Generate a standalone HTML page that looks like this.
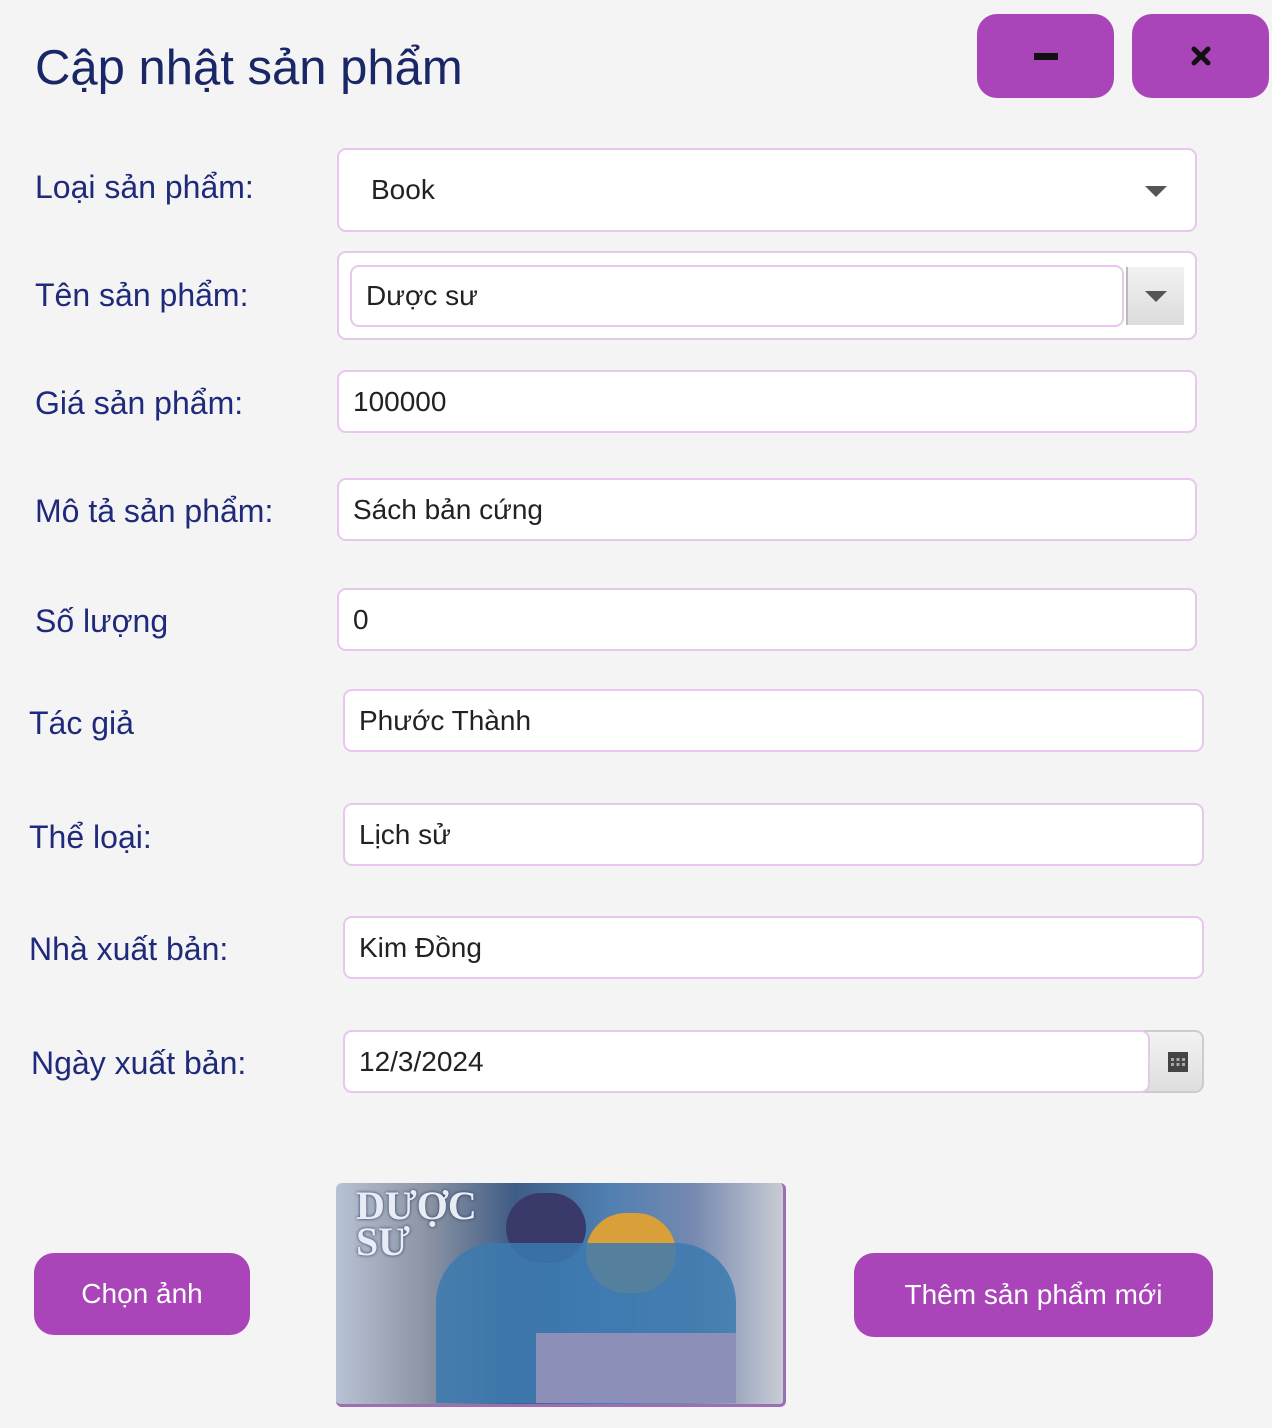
<!DOCTYPE html>
<html><head><meta charset="utf-8"><style>
body{margin:0;width:1272px;height:1428px;background:#f4f4f4;position:relative;overflow:hidden;font-family:"Liberation Sans","DejaVu Sans",sans-serif}
.a{position:absolute}
.lbl{position:absolute;color:#1f2a7a;font-size:32px;line-height:40px}
.f{position:absolute;background:#fff;border:2px solid #e8c6ee;border-radius:9px;box-sizing:border-box;font-size:28px;color:#222;padding-left:14px;display:flex;align-items:center}
.btn{position:absolute;background:#a945b8;border-radius:20px;color:#fff;font-size:28px;display:flex;align-items:center;justify-content:center}
</style></head><body>
<div class="a" style="left:35px;top:38px;font-size:49px;color:#1a2766;line-height:60px">Cập nhật sản phẩm</div>
<div class="btn" style="left:977px;top:14px;width:137px;height:84px"><div style="width:24px;height:7px;background:#111"></div></div>
<div class="btn" style="left:1132px;top:14px;width:137px;height:84px"><svg width="20" height="20" viewBox="0 0 20 20"><path d="M3 3L17 17M17 3L3 17" stroke="#111" stroke-width="5" stroke-linecap="round"/></svg></div>

<div class="lbl" style="left:35px;top:167px">Loại sản phẩm:</div>
<div class="f" style="left:337px;top:148px;width:860px;height:84px;padding-left:32px">Book
<svg class="a" style="left:806px;top:36px" width="22" height="12"><path d="M0 0H22L11 11Z" fill="#555"/></svg></div>

<div class="lbl" style="left:35px;top:275px">Tên sản phẩm:</div>
<div class="f" style="left:337px;top:251px;width:860px;height:89px"></div>
<div class="f" style="left:350px;top:265px;width:774px;height:62px">Dược sư</div>
<div class="a" style="left:1126px;top:267px;width:56px;height:58px;background:linear-gradient(#f2f2f2,#dcdcdc);border-left:2px solid #bbb"><svg class="a" style="left:17px;top:24px" width="22" height="12"><path d="M0 0H22L11 11Z" fill="#555"/></svg></div>

<div class="lbl" style="left:35px;top:383px">Giá sản phẩm:</div>
<div class="f" style="left:337px;top:370px;width:860px;height:63px">100000</div>
<div class="lbl" style="left:35px;top:491px">Mô tả sản phẩm:</div>
<div class="f" style="left:337px;top:478px;width:860px;height:63px">Sách bản cứng</div>
<div class="lbl" style="left:35px;top:601px">Số lượng</div>
<div class="f" style="left:337px;top:588px;width:860px;height:63px">0</div>
<div class="lbl" style="left:29px;top:703px">Tác giả</div>
<div class="f" style="left:343px;top:689px;width:861px;height:63px">Phước Thành</div>
<div class="lbl" style="left:29px;top:817px">Thể loại:</div>
<div class="f" style="left:343px;top:803px;width:861px;height:63px">Lịch sử</div>
<div class="lbl" style="left:29px;top:929px">Nhà xuất bản:</div>
<div class="f" style="left:343px;top:916px;width:861px;height:63px">Kim Đồng</div>
<div class="lbl" style="left:31px;top:1043px">Ngày xuất bản:</div>
<div class="a" style="left:343px;top:1030px;width:861px;height:63px;border:2px solid #ccc;border-radius:9px;box-sizing:border-box;background:linear-gradient(#f3f3f3,#dedede)"></div>
<div class="f" style="left:343px;top:1030px;width:807px;height:63px">12/3/2024</div>
<svg class="a" style="left:1168px;top:1052px" width="20" height="20"><rect width="20" height="20" fill="#444"/><g fill="#aaa"><rect x="3" y="6" width="3" height="3"/><rect x="8.5" y="6" width="3" height="3"/><rect x="14" y="6" width="3" height="3"/><rect x="3" y="11" width="3" height="3"/><rect x="8.5" y="11" width="3" height="3"/><rect x="14" y="11" width="3" height="3"/></g></svg>

<div class="btn" style="left:34px;top:1253px;width:216px;height:82px">Chọn ảnh</div>
<div class="btn" style="left:854px;top:1253px;width:359px;height:84px">Thêm sản phẩm mới</div>

<div class="a" style="left:336px;top:1183px;width:450px;height:224px;border-radius:6px;border-right:3px solid #9a6fb4;border-bottom:3px solid #9a6fb4;box-sizing:border-box;overflow:hidden;background:linear-gradient(90deg,#b7c2d4 0%,#8d95a4 20%,#3f5c86 40%,#4d7fb0 60%,#7689b0 80%,#c9ccd4 100%)">
<div class="a" style="left:170px;top:10px;width:80px;height:70px;border-radius:40px;background:#3a3a6a"></div>
<div class="a" style="left:250px;top:30px;width:90px;height:80px;border-radius:45px;background:#d9a03a"></div>
<div class="a" style="left:100px;top:60px;width:300px;height:160px;background:#3c7ab0;border-radius:60px 60px 0 0;opacity:.85"></div>
<div class="a" style="left:200px;top:150px;width:200px;height:70px;background:#8c90b8"></div>
<div class="a" style="left:20px;top:5px;color:#e8ecf5;font-size:40px;font-weight:bold;font-family:'Liberation Serif',serif;line-height:36px;text-shadow:0 0 3px #235">DƯỢC<br>SƯ</div>
</div>
</body></html>
